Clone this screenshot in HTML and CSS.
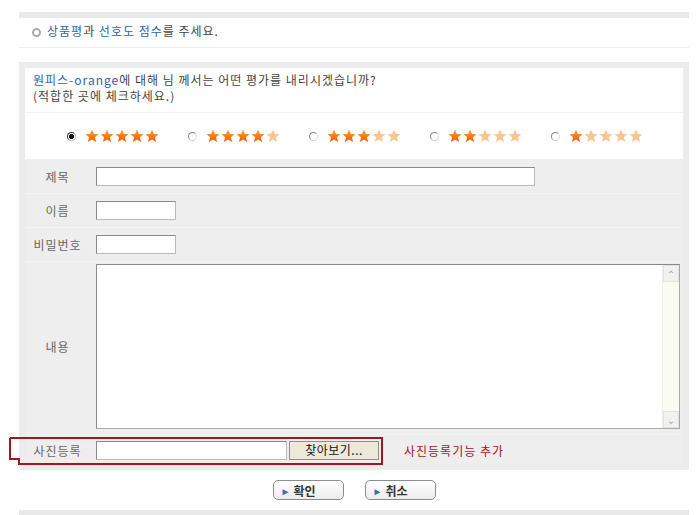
FILE: index.html
```html
<!DOCTYPE html>
<html>
<head>
	<title>상품평 쓰기</title>
	<meta charset="utf-8">
	<link rel="stylesheet" href="styles.css">
</head>
<body>

	<svg width="0" height="0" class="defs">
		<defs>
			<linearGradient id="full" x1="0" y1="0" x2="0" y2="1">
				<stop offset="0" stop-color="#ffa23a"/>
				<stop offset="1" stop-color="#f05a00"/>
			</linearGradient>
			<symbol id="star" viewBox="0 0 14 14">
				<polygon points="7,0.6 8.9,5 13.5,5.2 9.9,8.2 11.1,13 7,10.4 2.9,13 4.1,8.2 0.5,5.2 5.1,5"/>
			</symbol>
		</defs>
	</svg>

	<div class="page">
		<div class="bar"></div>

		<p class="intro"><span class="bullet"></span><a href="#">상품평</a>과 <a href="#">선호도 점수</a>를 주세요.</p>

		<div class="box">
			<p class="question"><a href="#">원피스-orange</a>에 대해 님 께서는 어떤 평가를 내리시겠습니까?<br>(적합한 곳에 체크하세요.)</p>

			<div class="rating" id="rating"></div>

			<div class="form">
				<div class="row">
					<div class="label">제목</div>
					<div class="field"><input type="text" class="long"></div>
				</div>
				<div class="row">
					<div class="label">이름</div>
					<div class="field"><input type="text" class="short"></div>
				</div>
				<div class="row">
					<div class="label">비밀번호</div>
					<div class="field"><input type="password" class="short"></div>
				</div>
				<div class="row memo_row">
					<div class="label">내용</div>
					<div class="field">
						<div class="memo">
							<textarea></textarea>
							<div class="scroll">
								<span class="arrow">&#8963;</span>
								<span class="track"></span>
								<span class="arrow">&#8964;</span>
							</div>
						</div>
					</div>
				</div>
				<div class="row photo_row">
					<svg class="mark" width="380" height="32">
						<polyline points="1,1 373,1 373,27 10,27 10,22 1,22 1,1" />
					</svg>
					<div class="label">사진등록</div>
					<div class="field">
						<input type="text" class="file"><button class="browse">찾아보기...</button>
						<span class="note">사진등록기능 추가</span>
					</div>
				</div>
			</div>
		</div>

		<div class="buttons">
			<button class="btn"><span class="tri">&#9658;</span>확인</button>
			<button class="btn"><span class="tri">&#9658;</span>취소</button>
		</div>

		<div class="bar bottom"></div>
	</div>

	<script type="text/javascript">
		// five rating choices, 5 stars down to 1
		let rating = document.querySelector("#rating");

		for (let score = 5; score >= 1; score--) {
			let html = '<label class="choice"><input type="radio" name="score"' + (score == 5 ? ' checked' : '') + '>';
			for (let i = 1; i <= 5; i++) {
				html += '<svg class="star ' + (i <= score ? 'on' : 'off') + '"><use href="#star"/></svg>';
			}
			html += '</label>';
			rating.innerHTML += html;
		}
	</script>
</body>
</html>
```

FILE: styles.css
```css
* {
	box-sizing: border-box;
}

body {
	margin: 0px;
	padding: 0px;
	background: white;
	font-family: "Noto Sans CJK KR", "DejaVu Sans", sans-serif;
	font-size: 12px;
	letter-spacing: 1px;
	color: #333;
}

.defs {
	position: absolute;
}

a {
	color: #2f64a8;
	text-decoration: none;
}

p {
	margin: 0px;
}

.page {
	width: 670px;
	margin-left: 19px;
	padding-top: 12px;
}

.bar {
	height: 6px;
	background: #e9e9e9;
}

.bar.bottom {
	margin-top: 10px;
}

.intro {
	height: 30px;
	line-height: 26px;
	padding-left: 13px;
	border-bottom: 1px solid #eeeeee;
	color: #444;
}

.bullet {
	display: inline-block;
	width: 9px;
	height: 9px;
	border: 2px solid #a9a9a9;
	border-radius: 50%;
	margin-right: 6px;
	vertical-align: -1px;
}

.box {
	margin-top: 14px;
	border: 6px solid #ececec;
	background: white;
}

.question {
	padding: 4px 8px 0px 8px;
	height: 45px;
	line-height: 16px;
	border-bottom: 1px solid #f0f0f0;
	color: #444;
}

.rating {
	height: 46px;
	display: flex;
	align-items: center;
	padding-left: 42px;
	gap: 28px;
}

.choice {
	display: flex;
	align-items: center;
}

.choice input {
	appearance: none;
	width: 9px;
	height: 9px;
	margin: 0px 9px 0px 0px;
	border: 1px solid #888;
	border-right-color: #ddd;
	border-bottom-color: #ccc;
	border-radius: 50%;
	background: white;
}

.choice input:checked {
	background: radial-gradient(circle, #111 0px, #111 2.2px, white 2.8px);
	border-color: #333 #bbb #bbb #333;
}

.star {
	width: 14px;
	height: 14px;
	margin-right: 1px;
}

.star.on {
	fill: url(#full);
}

.star.off {
	fill: #fcc590;
}

.form {
	background: #eeeeee;
}

.row {
	display: flex;
	align-items: center;
	height: 34px;
	border-top: 1px solid #f3f3f3;
}

.row:first-child {
	border-top: 0px;
}

.label {
	width: 65px;
	text-align: center;
	color: #666;
}

.field {
	flex: 1;
	padding-left: 6px;
	display: flex;
	align-items: center;
}

input[type=text], input[type=password] {
	height: 19px;
	margin: 0px;
	border: 1px solid #8a8a8a;
	border-right-color: #b9b9b9;
	border-bottom-color: #b9b9b9;
	background: white;
	font-size: 12px;
}

.long {
	width: 439px;
}

.short {
	width: 80px;
}

.memo_row {
	height: 173px;
	padding-bottom: 3px;
}

.memo {
	width: 584px;
	height: 165px;
	display: flex;
	border: 1px solid #8a8a8a;
	border-right-color: #a9a9a9;
	border-bottom-color: #a9a9a9;
	background: white;
}

.memo textarea {
	flex: 1;
	border: 0px;
	resize: none;
	outline: none;
}

.scroll {
	width: 17px;
	display: flex;
	flex-direction: column;
	background: #fbfbf2;
	border-left: 1px solid #f0f0e6;
}

.arrow {
	height: 17px;
	background: #f1f1ef;
	border: 1px solid #e2e2de;
	color: #a8a8a8;
	font-size: 10px;
	line-height: 15px;
	text-align: center;
	letter-spacing: 0px;
}

.track {
	flex: 1;
}

.photo_row {
	position: relative;
	height: 30px;
	padding-top: 1px;
}

.mark {
	position: absolute;
	left: -16px;
	top: 2px;
	overflow: visible;
}

.mark polyline {
	fill: none;
	stroke: #a5151d;
	stroke-width: 2px;
}

.file {
	width: 191px;
}

.browse {
	width: 90px;
	height: 19px;
	margin-left: 2px;
	padding: 0px;
	border: 1px solid #8f8f8f;
	background: #ece9d8;
	font-family: "Noto Sans CJK KR", sans-serif;
	font-size: 12px;
	letter-spacing: 0.5px;
	line-height: 16px;
	color: #111;
}

.note {
	margin-left: 25px;
	color: #a5151d;
}

.buttons {
	display: flex;
	justify-content: center;
	gap: 21px;
	margin-top: 10px;
}

.btn {
	width: 71px;
	height: 20px;
	padding: 0px 0px 0px 7px;
	text-align: left;
	border: 1px solid #8c8c8c;
	border-radius: 5px;
	background: linear-gradient(#ffffff, #ececec);
	font-family: "Noto Sans CJK KR", sans-serif;
	font-size: 12px;
	font-weight: bold;
	line-height: 17px;
	letter-spacing: 0px;
	color: #333;
}

.tri {
	color: #2f6fc4;
	font-size: 10px;
	margin-right: 3px;
	vertical-align: 1px;
}
```
